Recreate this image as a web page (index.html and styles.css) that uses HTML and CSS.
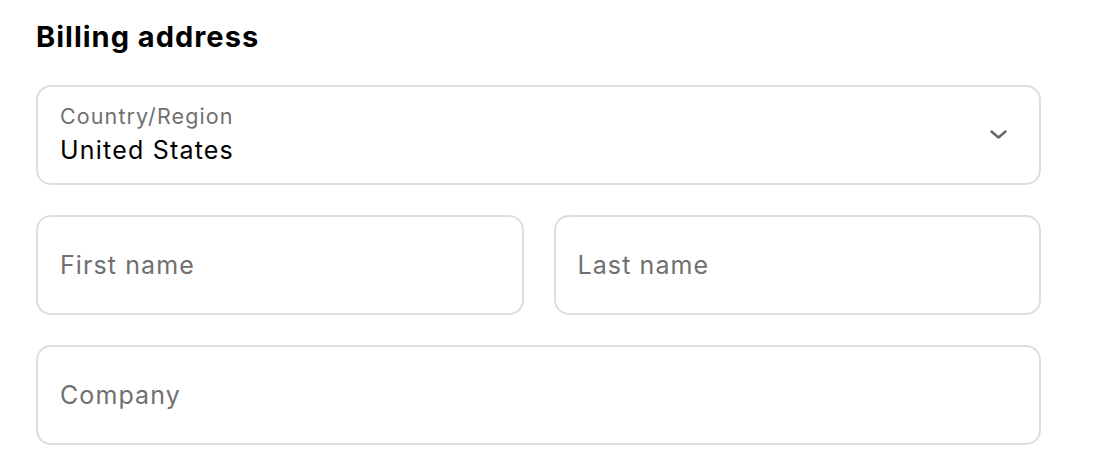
FILE: index.html
```html
<!DOCTYPE html>
<html lang="en">
<head>
<meta charset="utf-8">
<title>Billing address</title>
<link rel="stylesheet" href="styles.css">
</head>
<body>
<section class="billing">
  <h2 class="title">Billing address</h2>
  <div class="fields">
    <div class="field field-select">
      <div class="select-text">
        <span class="float-label">Country/Region</span>
        <span class="value">United States</span>
      </div>
      <svg class="chevron" width="17" height="9" viewBox="0 0 17 9" aria-hidden="true">
        <path d="M1.5 1.5 L8.5 7.5 L15.5 1.5" fill="none" stroke="#666" stroke-width="2.4" stroke-linecap="round" stroke-linejoin="round"/>
      </svg>
    </div>
    <div class="row">
      <div class="field"><span class="placeholder">First name</span></div>
      <div class="field"><span class="placeholder">Last name</span></div>
    </div>
    <div class="field"><span class="placeholder">Company</span></div>
  </div>
</section>
</body>
</html>
```

FILE: styles.css
```css
html, body {
  margin: 0;
  padding: 0;
  background: #ffffff;
}

body {
  font-family: Inter, "Noto Sans", "Liberation Sans", sans-serif;
  color: #000000;
}

.billing {
  width: 1005px;
  padding: 19px 0 0 36px;
}

.title {
  margin: 0;
  font-size: 29px;
  line-height: 36px;
  font-weight: 700;
  letter-spacing: 1px;
}

.fields {
  margin-top: 30px;
  display: flex;
  flex-direction: column;
  gap: 30px;
}

.row {
  display: grid;
  grid-template-columns: 1fr 1fr;
  gap: 30px;
}

.field {
  box-sizing: border-box;
  height: 100px;
  border: 2px solid #dedede;
  border-radius: 15px;
  padding: 0 22px;
  display: flex;
  align-items: center;
}

.field-select {
  justify-content: space-between;
  padding-right: 32px;
}

.select-text {
  display: flex;
  flex-direction: column;
}

.float-label {
  font-size: 21.5px;
  line-height: 30px;
  letter-spacing: 1.1px;
  color: #707070;
}

.value {
  font-size: 25px;
  line-height: 38px;
  letter-spacing: 1.2px;
  color: #000000;
}

.placeholder {
  font-size: 25px;
  line-height: 32px;
  letter-spacing: 1.1px;
  color: #707070;
}

.chevron {
  display: block;
  margin-top: -2px;
}
```
